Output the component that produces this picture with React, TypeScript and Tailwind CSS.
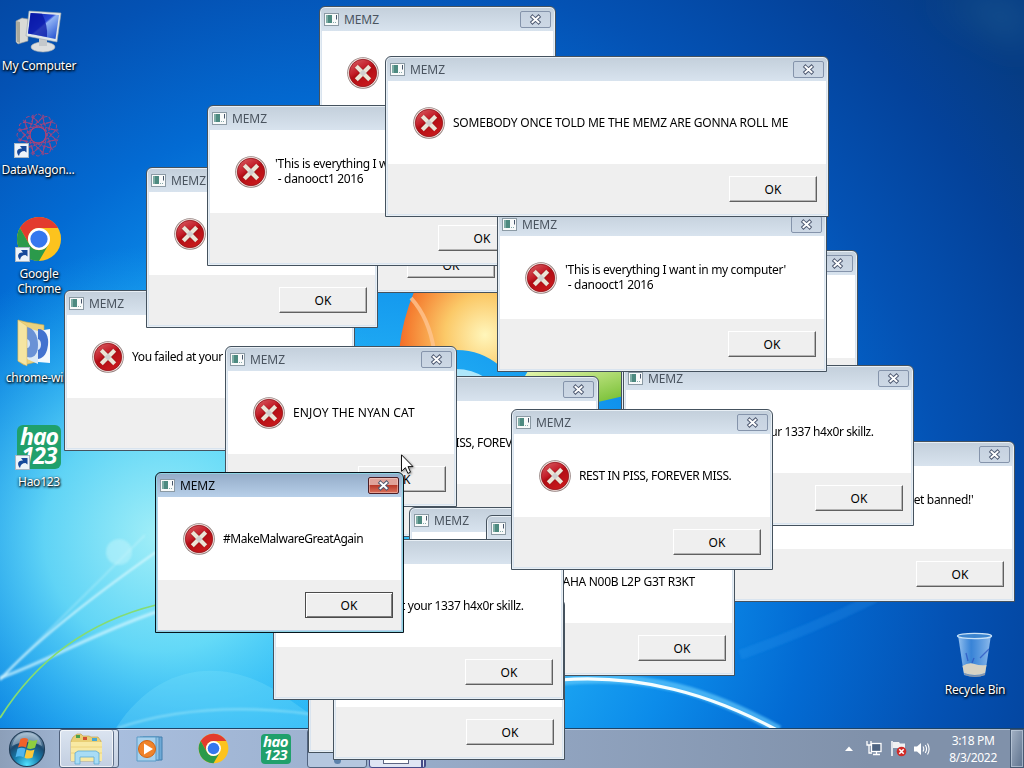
import React from "react";

type Dialog = {
  id: string;
  box: string;
  lines?: string[];
  tracking?: string;
  ok?: string;
  active?: boolean;
};

const SOMEBODY = "SOMEBODY ONCE TOLD ME THE MEMZ ARE GONNA ROLL ME";
const DANOOCT = ["'This is everything I want in my computer'", "\u00a0- danooct1 2016"];
const SKILLZ = ["You failed at your 1337 h4x0r skillz."];
const PISS = ["REST IN PISS, FOREVER MISS."];

// Bottom-most window first.
const dialogs: Dialog[] = [
  { id: "g", box: "left-[270px] top-[132px] w-[236px]", ok: "mr-[8px]" },
  { id: "a", box: "left-[319px] top-[6px] w-[237px]" },
  { id: "i", box: "left-[621px] top-[250px] w-[237px]" },
  { id: "j", box: "left-[695px] top-[441px] w-[320px]", lines: ["'Uh, Club Penguin. Time to get banned!'", "\u00a0"], tracking: "tracking-[-0.33px]", ok: "mr-[8px]" },
  { id: "q", box: "left-[337px] top-[376px] w-[262px]", lines: PISS, tracking: "tracking-[-0.4px]" },
  { id: "f", box: "left-[64px] top-[290px] w-[291px]", lines: SKILLZ, tracking: "tracking-[-0.41px]" },
  { id: "o", box: "left-[308px] top-[592px] w-[240px]" },
  { id: "l", box: "left-[409px] top-[507px] w-[250px]" },
  { id: "k", box: "left-[486px] top-[515px] w-[249px]", lines: ["HAHA N00B L2P G3T R3KT"], tracking: "tracking-[-0.29px]", ok: "mr-[6px]" },
  { id: "n", box: "left-[333px] top-[599px] w-[232px]", ok: "mr-[8px]" },
  { id: "m", box: "left-[273px] top-[539px] w-[291px]", lines: SKILLZ, tracking: "tracking-[-0.41px]", ok: "mr-[8px]" },
  { id: "e", box: "left-[146px] top-[167px] w-[232px]", ok: "mr-[8px]" },
  { id: "c", box: "left-[207px] top-[105px] w-[330px]", lines: DANOOCT, tracking: "tracking-[-0.33px]", ok: "mr-[8px]" },
  { id: "h", box: "left-[623px] top-[365px] w-[291px]", lines: SKILLZ, tracking: "tracking-[-0.41px]", ok: "mr-[8px]" },
  { id: "d", box: "left-[497px] top-[211px] w-[330px]", lines: DANOOCT, tracking: "tracking-[-0.33px]", ok: "mr-[8px]" },
  { id: "b", box: "left-[385px] top-[56px] w-[444px]", lines: [SOMEBODY], tracking: "tracking-[-0.22px]", ok: "mr-[9px]" },
  { id: "p", box: "left-[225px] top-[346px] w-[232px]", lines: ["ENJOY THE NYAN CAT"], tracking: "tracking-[0.11px]", ok: "mr-[8px]" },
  { id: "r", box: "left-[511px] top-[409px] w-[262px]", lines: PISS, tracking: "tracking-[-0.4px]", ok: "mr-[9px]" },
  { id: "s", box: "left-[155px] top-[472px] w-[249px]", lines: ["#MakeMalwareGreatAgain"], tracking: "tracking-[-0.47px]", ok: "mr-[8px]", active: true },
];

function AppGlyph() {
  return (
    <svg width="15" height="13" viewBox="0 0 15 13" className="-mt-px shrink-0">
      <rect x=".5" y=".5" width="14" height="12" fill="#f8fafa" stroke="#8b9aa4" />
      <rect x="2" y="2" width="6" height="8" fill="#4d8a80" />
      <rect x="2" y="2" width="2" height="8" fill="#7fada6" />
      <path d="M9 9.5h1M11 9.5h1" stroke="#8aa" />
      <path d="M12.5 2v4.5" stroke="#47566b" />
    </svg>
  );
}

function ErrorIcon() {
  return (
    <svg width="32" height="32" viewBox="0 0 32 32" className="mt-[33px] shrink-0">
      <defs>
        <linearGradient id="err" x1="0" y1="0" x2="0.6" y2="1">
          <stop offset="0" stopColor="#d9666a" />
          <stop offset=".45" stopColor="#c41f2a" />
          <stop offset=".55" stopColor="#b20d14" />
          <stop offset="1" stopColor="#c8191c" />
        </linearGradient>
      </defs>
      <circle cx="16" cy="16" r="15.8" fill="#93807e" />
      <circle cx="16" cy="16" r="15" fill="#f3e4e1" />
      <circle cx="16" cy="16" r="13.7" fill="url(#err)" stroke="#92141a" strokeWidth=".8" />
      <path d="M9.500 9.500l13 13M22.500 9.500l-13 13" stroke="#8a1014" strokeWidth="5.200" />
      <path d="M9.300 9.300l13.400 13.400M22.700 9.300l-13.400 13.400" stroke="#ece4d6" strokeWidth="4.200" />
      <path d="M16 12.500l3.500 3.500-3.500 3.500-3.500-3.500z" fill="#d0d0d0" />
    </svg>
  );
}

function CloseButton({ active }: { active?: boolean }) {
  return (
    <div
      className={
        active
          ? "flex h-[17px] w-[31px] items-center justify-center rounded-[2px] border border-[#4b1e26] bg-linear-to-b from-[#e0a299] from-45% via-[#b93a2a] via-50% to-[#d9705c] shadow-[inset_0_0_0_1px_rgba(255,220,210,.45)]"
          : "flex h-[17px] w-[31px] items-center justify-center rounded-[2px] border border-[#8594ab] bg-linear-to-b from-[#c6d2e0] to-[#cdd8e5]"
      }
    >
      <svg width="13" height="11" viewBox="0 0 13 11">
        <path d="M3.500 2.800l6 5.400M9.500 2.800L3.500 8.200" stroke="#4d5870" strokeWidth="3.800" strokeLinecap="square" />
        <path d="M3.500 2.800l6 5.400M9.500 2.800L3.500 8.200" stroke="#fff" strokeWidth="2" strokeLinecap="square" />
      </svg>
    </div>
  );
}

function MessageBox({ d }: { d: Dialog }) {
  const frame = d.active
    ? "border-[#07141d] bg-linear-to-b from-[#93abc8] to-[#b9d1ea] to-[25px] shadow-[inset_0_0_0_1px_#8fd3e2]"
    : "border-[#45525e] bg-linear-to-b from-[#c3cfdb] to-[#d9e4ef] to-[25px] shadow-[inset_0_0_0_1px_#e8eff5]";
  return (
    <section className={`absolute flex h-[161px] flex-col rounded-t-[6px] border px-[2px] pb-[2px] ${frame} ${d.box}`}>
      <header className="flex h-[24px] shrink-0 items-start justify-between pl-[2px] pr-[2px] pt-[4px]">
        <div className="flex items-center gap-[5px] pt-[1px]">
          <AppGlyph />
          <span className={`text-[12px] leading-[16px] tracking-[-0.1px] ${d.active ? "text-[#05080c]" : "text-[#4a545f]"}`}>MEMZ</span>
        </div>
        <CloseButton active={d.active} />
      </header>
      <div className="flex h-[83px] shrink-0 overflow-hidden bg-white pl-[25px]">
        <div className="-mt-[7px] flex gap-[8px]">
          {d.lines || d.id === "a" || d.id === "e" ? <ErrorIcon /> : null}
          <div className="flex h-[96px] flex-col justify-center whitespace-nowrap text-[12px] leading-[15px] text-black">
            {(d.lines ?? []).map((t) => (
              <p key={t} className={d.tracking}>{t}</p>
            ))}
          </div>
        </div>
      </div>
      <footer className="flex flex-1 justify-end bg-[#efefef] pt-[12px]">
        {d.ok && (
          <button
            className={`flex h-[26px] w-[88px] items-center justify-center border text-[12px] leading-[15px] text-black ${
              d.active
                ? "border-[#4b4b4b] shadow-[inset_1px_1px_0_#fff,inset_-1px_-1px_0_#7d7d7d]"
                : "border-b-[#606060] border-l-white border-r-[#606060] border-t-white shadow-[inset_-1px_-1px_0_#b4b4b4]"
            } ${d.ok}`}
          >
            OK
          </button>
        )}
      </footer>
    </section>
  );
}

function Wallpaper() {
  return (
    <svg className="absolute inset-0" width="1024" height="768" viewBox="0 0 1024 768">
      <defs>
        <radialGradient id="base" gradientUnits="userSpaceOnUse" cx="360" cy="560" r="820">
          <stop offset="0" stopColor="#35c0fa" />
          <stop offset=".22" stopColor="#22aff5" />
          <stop offset=".4" stopColor="#0c8cea" />
          <stop offset=".55" stopColor="#036bd3" />
          <stop offset=".72" stopColor="#0452b4" />
          <stop offset=".88" stopColor="#04429a" />
          <stop offset="1" stopColor="#063c84" />
        </radialGradient>
        <radialGradient id="glow" gradientUnits="userSpaceOnUse" cx="160" cy="535" r="290">
          <stop offset="0" stopColor="#a9f2f8" stopOpacity=".95" />
          <stop offset=".4" stopColor="#74e4f8" stopOpacity=".8" />
          <stop offset="1" stopColor="#20b8f6" stopOpacity="0" />
        </radialGradient>
        <radialGradient id="orange" gradientUnits="userSpaceOnUse" cx="485" cy="335" r="100">
          <stop offset="0" stopColor="#fff6bb" />
          <stop offset=".4" stopColor="#fbc968" />
          <stop offset=".75" stopColor="#f58334" />
          <stop offset="1" stopColor="#f0501c" />
        </radialGradient>
        <linearGradient id="green" x1="0" y1="0" x2="1" y2="1">
          <stop offset="0" stopColor="#e7f7ae" />
          <stop offset="1" stopColor="#72bd2f" />
        </linearGradient>
        <filter id="soft"><feGaussianBlur stdDeviation="1.2" /></filter>
        <filter id="softer" x="-50%" y="-50%" width="200%" height="200%"><feGaussianBlur stdDeviation="18" /></filter>
      </defs>
      <rect width="1024" height="768" fill="url(#base)" />
      <rect width="500" height="768" fill="url(#glow)" />
      <path d="M930 0h94v50q-40-30-94-50z" fill="#3c83a5" opacity=".3" filter="url(#softer)" />
      <path d="M116 728C160 660 230 655 290 700L330 728z" fill="#7ce4fa" opacity=".28" />
      <g fill="none" filter="url(#soft)">
        <path d="M118 728Q200 700 310 714" stroke="#a5eafa" strokeWidth="2" opacity=".6" />
        <path d="M0 678C50 660 90 635 156 612" stroke="#d3f5ff" strokeWidth="3" opacity=".75" />
        <path d="M0 680Q45 630 156 552" stroke="#dffaff" strokeWidth="2" opacity=".85" />
        <path d="M0 678Q55 625 145 535" stroke="#dffaff" strokeWidth="1.5" opacity=".4" />
        <path d="M740 655Q810 630 875 598" stroke="#35a8f7" strokeWidth="10" opacity=".18" />
        <path d="M560 681C650 672 710 692 779 730" stroke="#5fc6fb" strokeWidth="9" opacity=".7" />
      </g>
      <path d="M560 680C640 674 710 694 777 730" fill="none" stroke="#f4fdff" strokeWidth="3.2" />
      <path d="M0 718Q55 630 156 605" fill="none" stroke="#85dc72" strokeWidth="1.8" />
      <circle cx="119" cy="552" r="13" fill="#c9f7fc" opacity=".45" filter="url(#soft)" />
      <path d="M414 292H500V366Q480 349 454 350L399 350Q403 318 414 292z" fill="url(#orange)" />
      <path d="M411 298Q429 318 434 350" fill="none" stroke="#ffc795" strokeWidth="4" opacity=".75" />
      <path d="M456 369Q472 369 486 378H456z" fill="#aee6fa" />
      <path d="M528 371H624V396L598 402 560 380 525 376z" fill="url(#green)" />
    </svg>
  );
}

function ComputerIcon() {
  return (
    <svg width="48" height="44" viewBox="0 0 48 44">
      <defs>
        <linearGradient id="scr" x1="0" y1="0" x2="1" y2="1">
          <stop offset="0" stopColor="#0a1aa8" />
          <stop offset=".45" stopColor="#2a49d8" />
          <stop offset=".5" stopColor="#8fb2f4" />
          <stop offset="1" stopColor="#1846cc" />
        </linearGradient>
      </defs>
      <path d="M1 12l6-3 6 1v22l-10 3-2-2z" fill="#d9dad6" stroke="#8d9296" strokeWidth=".6" />
      <path d="M1 12l4 1v21l-3-1z" fill="#aaa99c" />
      <ellipse cx="28" cy="38" rx="12" ry="5" fill="#dcdedf" stroke="#a5abb0" strokeWidth=".6" />
      <path d="M24 29h8v8h-8z" fill="#c4c8cb" />
      <path d="M14 2l32 2-4 29-31-6z" fill="#dfe6ea" stroke="#9aa6ad" strokeWidth=".6" />
      <path d="M15.500 4l28.500 2-3.500 24L13 24.500z" fill="url(#scr)" />
      <path d="M16 4l11 .8Q33 16 32 28L13 24.500z" fill="#0716a6" opacity=".75" />
    </svg>
  );
}

function DataWagonIcon() {
  const petals = [0, 30, 60, 90, 120, 150];
  return (
    <svg width="48" height="44" viewBox="0 0 48 44">
      <g fill="none" stroke="#a0457f" strokeWidth="1">
        {petals.map((a) => (
          <g key={a} transform={`rotate(${a} 24 22)`}>
            <ellipse cx="24" cy="22" rx="8" ry="21" strokeDasharray="4 1.5" />
            <path d="M18 2l6 8 6-8M18 42l6-8 6 8" strokeWidth=".8" />
          </g>
        ))}
        <circle cx="24" cy="22" r="8" stroke="#b8406e" />
      </g>
    </svg>
  );
}

function ChromeIcon({ size }: { size: string }) {
  return (
    <svg viewBox="0 0 48 48" className={size}>
      <circle cx="24" cy="24" r="23" fill="#fcc31e" />
      <path d="M4.100 12.500A23 23 0 0 1 43.900 12.500H24A11.500 11.500 0 0 0 14 29.800z" fill="#e33b2e" />
      <path d="M4.100 12.500A23 23 0 0 0 24 47L34 29.800A11.500 11.500 0 0 1 14 29.800z" fill="#2b9a4b" />
      <circle cx="24" cy="24" r="11.500" fill="#fff" />
      <circle cx="24" cy="24" r="9" fill="#3577ee" />
    </svg>
  );
}

function FolderDiscs() {
  return (
    <svg width="48" height="48" viewBox="0 0 48 48">
      <path d="M4 1l8 2 18 3v35l-20 5-6-4z" fill="#ecd27d" stroke="#c9a94f" strokeWidth=".6" />
      <path d="M13 9l11 3v33l-11-5z" fill="#dceaf6" />
      <path d="M13 8c7 1 11 9 11 18s-4 14-11 12z" fill="#6a92d6" />
      <path d="M13 20c4 1 4 9 0 9z" fill="#d5e4f7" />
      <path d="M4 1l9 6v40l-9-5z" fill="#f5e5a2" stroke="#d5b75e" strokeWidth=".5" />
      <path d="M24 12l12-2v34l-12-1z" fill="#f4f9fd" />
      <path d="M24 10c8 0 11 8 10 16s-4 13-10 14z" fill="#4272cf" />
      <path d="M24 20c4 1 4 10 0 11z" fill="#dce9f8" />
    </svg>
  );
}

function HaoLogo({ size }: { size: "lg" | "sm" }) {
  const lg = size === "lg";
  return (
    <div
      className={`flex flex-col items-center justify-center bg-[#20a06c] font-['Open_Sans',sans-serif] font-bold italic text-white ${
        lg ? "h-[44px] w-[44px] rounded-[6px] pb-[2px] text-[23px] leading-[19px] tracking-[-1px]" : "h-[30px] w-[30px] rounded-[4px] pb-[1px] text-[15px] leading-[13px] tracking-[-0.6px]"
      }`}
    >
      <span>hao</span>
      <span>123</span>
    </div>
  );
}

function Shortcut() {
  return (
    <svg width="15" height="15" viewBox="0 0 15 15" className="absolute bottom-px left-0">
      <rect x=".5" y=".5" width="14" height="14" fill="#eef4fa" stroke="#a9b7c4" />
      <path d="M5 13C1 8 4 5 8 5.500L6 3h6.500v6.500L10.500 8C7.500 8 5.500 9.500 5 13z" fill="#17499a" />
    </svg>
  );
}

function BinIcon() {
  return (
    <svg width="38" height="46" viewBox="0 0 38 46">
      <defs>
        <linearGradient id="bin">
          <stop offset="0" stopColor="#a5cdf5" stopOpacity=".9" />
          <stop offset=".4" stopColor="#4f9ae8" stopOpacity=".7" />
          <stop offset="1" stopColor="#9cc6f3" stopOpacity=".9" />
        </linearGradient>
      </defs>
      <path d="M2 3l6 40q11 4 21 0l6-40z" fill="url(#bin)" />
      <path d="M6.500 34q6-4 12-2t12 1l-1.500 8q-10 4-21 0z" fill="#d8d3c4" />
      <path d="M8 41q11 5 21 0v2q-10 4-20 0z" fill="#8d96a5" />
      <path d="M10 21l2 8M18 26l-2 5M33 17L24 26" stroke="#2a50c0" strokeWidth="1.300" opacity=".7" />
      <ellipse cx="18.500" cy="4" rx="17" ry="2.600" fill="#3b84cf" stroke="#c9e2f7" strokeWidth="1.400" />
    </svg>
  );
}

function DesktopIcon({ label, shortcut, children, place }: { label: string; shortcut?: boolean; children: React.ReactNode; place: string }) {
  return (
    <div className={`absolute flex w-[80px] flex-col items-center ${place}`}>
      <div className="relative flex h-[48px] w-[48px] items-center justify-center">
        {children}
        {shortcut && <Shortcut />}
      </div>
      <span className="mt-[3px] whitespace-pre text-center text-[12px] leading-[15px] tracking-[-0.25px] text-white [text-shadow:1px_1px_2px_#000,0_1px_3px_#000]">{label}</span>
    </div>
  );
}

function StartOrb() {
  return (
    <svg width="38" height="38" viewBox="0 0 38 38">
      <defs>
        <radialGradient id="orb" cx=".5" cy=".95" r=".9">
          <stop offset="0" stopColor="#52e2ff" />
          <stop offset=".4" stopColor="#177fae" />
          <stop offset=".7" stopColor="#1b4a70" />
          <stop offset="1" stopColor="#8aa5bd" />
        </radialGradient>
      </defs>
      <circle cx="19" cy="19" r="17.500" fill="url(#orb)" stroke="#223e58" strokeWidth="1.200" />
      <path d="M4 16Q19 8 34 16Q31 3 19 3T4 16z" fill="#dceaf4" opacity=".4" />
      <path d="M12.500 9q4-2 7.500 0l-2 8.500q-4-2-8 0z" fill="#f0622a" />
      <path d="M21 9.800q4 2 8.500 0l-2.500 8q-4 2-8 .5z" fill="#8fce3f" />
      <path d="M9.500 18.800q4-2 8 0l-2 8.500q-4-2-8 0z" fill="#4fb5ee" />
      <path d="M18.500 19.500q4 2 8 0l-2 8q-4 2-8 .2z" fill="#fbc83a" />
    </svg>
  );
}

function ExplorerIcon() {
  return (
    <svg width="34" height="32" viewBox="0 0 34 32">
      <path d="M3 4l4-3h4l2 2h6l2 1h7l3 4v20H1V8z" fill="#e9cf75" stroke="#b99c45" strokeWidth=".6" />
      <path d="M1 9h31v19H1z" fill="#f8e9a3" />
      <path d="M1 14h31M1 20h31" stroke="#ecd27d" />
      <path d="M6 2h4v3H6z" fill="#4aa04c" />
      <path d="M13 4h4v3h-4z" fill="#d25232" />
      <path d="M22 5h5v3h-5z" fill="#4aa8d2" />
      <path d="M5 31V20l3-2h18l3 2v11h-5v-7H10v7z" fill="#a8dcf5" stroke="#5eaad3" strokeWidth=".8" />
    </svg>
  );
}

function PlayerIcon() {
  return (
    <svg width="28" height="26" viewBox="0 0 28 26">
      <path d="M7 1h19v23H7z" fill="#6ea9d6" stroke="#437fae" />
      <path d="M4 1h19v23H4z" fill="#91c2e4" stroke="#4f8dbb" />
      <path d="M1 1h19v24H1z" fill="#a7d1ed" stroke="#5b9bc7" />
      <circle cx="11" cy="13" r="8.500" fill="#f0832a" stroke="#cf6413" />
      <path d="M8 7.500v11l9-5.500z" fill="#fff" />
    </svg>
  );
}

function Tray() {
  return (
    <div className="flex h-full items-center">
      <svg width="8" height="5" viewBox="0 0 8 5"><path d="M0 5l4-4.500L8 5z" fill="#fff" /></svg>
      <svg width="16" height="15" viewBox="0 0 16 15" className="ml-[13px]">
        <rect x="5.500" y="2.500" width="9.500" height="8" fill="#4e6482" stroke="#fff" strokeWidth="1.300" />
        <path d="M7 13.500h7M10.500 11v2M1 0v4h4V0M3 4v8h3" fill="none" stroke="#fff" strokeWidth="1.300" />
      </svg>
      <svg width="17" height="17" viewBox="0 0 17 17" className="ml-[8px]">
        <path d="M2 1v15" stroke="#fff" strokeWidth="1.500" />
        <path d="M3 2h6l1 1.500h5v6H9L8 8H3z" fill="#f0f1f2" />
        <circle cx="11.500" cy="11.500" r="4.800" fill="#d12a26" />
        <path d="M9.300 9.300l4.400 4.400M13.700 9.300l-4.400 4.400" stroke="#fff" strokeWidth="1.600" />
      </svg>
      <svg width="16" height="14" viewBox="0 0 16 14" className="ml-[7px]">
        <path d="M0 4.500h3L7 1v12L3 9.500H0z" fill="#fff" />
        <path d="M9 4.500q1.600 2.500 0 5M11.300 3q2.500 4 0 8M13.500 1.500q3.200 5.500 0 11" fill="none" stroke="#fff" strokeWidth="1.100" />
      </svg>
    </div>
  );
}

function Taskbar() {
  return (
    <footer className="absolute bottom-0 left-0 flex h-[40px] w-[1024px] items-center border-t border-[#1d4468] bg-linear-to-r from-[#8c9fb9] from-0% via-[#a9bfdf] via-10% to-[#8091aa] to-85% shadow-[inset_0_1px_0_rgba(225,238,250,.5)]">
      <div className="flex h-full w-[59px] items-center pl-[8px]"><StartOrb /></div>
      <div className="flex h-[39px] w-[60px] rounded-[3px] border border-[#50617b] bg-linear-to-b from-[#dbe4f0] to-[#c3cfe1]">
        <div className="flex w-[54px] items-center justify-center rounded-[3px] border-r border-[#61728b] shadow-[inset_0_0_0_1px_rgba(255,255,255,.7)]"><ExplorerIcon /></div>
      </div>
      <div className="flex w-[62px] justify-center"><PlayerIcon /></div>
      <div className="flex w-[64px] justify-center"><ChromeIcon size="h-[31px] w-[31px]" /></div>
      <div className="flex w-[61px] justify-center"><HaoLogo size="sm" /></div>
      <div className="ml-[1px] flex h-[39px] w-[60px] items-end justify-center rounded-[3px] border border-[#51637f] bg-[#b5c7df] pb-[3px]">
        <div className="h-[5px] w-[7px] rounded-b-full bg-[#5d82ab]" />
      </div>
      <div className="ml-[2px] flex h-[39px] w-[57px] items-end justify-center gap-[3px] rounded-[3px] border border-[#464c88] border-r-[5px] border-double bg-[#dfe5f3] pb-[3px]">
        <div className="h-[7px] w-[26px] border border-[#5d6683] bg-white" />
      </div>
      <div className="ml-auto mr-[19px]"><Tray /></div>
      <div className="mr-[13px] flex flex-col items-center text-[12px] leading-[17px] tracking-[-0.3px] text-white">
        <span>3:18 PM</span>
        <span>8/3/2022</span>
      </div>
      <div className="h-full w-[14px] border border-[#475a73] bg-linear-to-br from-[#a4b2c5] to-[#5e728d] shadow-[inset_0_0_0_1px_rgba(200,213,228,.6)]" />
    </footer>
  );
}

export default function App() {
  return (
    <main className="relative h-[768px] w-[1024px] overflow-hidden bg-[#0c90ee] font-['Noto_Sans','Open_Sans',sans-serif]">
      <Wallpaper />
      <DesktopIcon label="My Computer" place="left-[-1px] top-[7px]"><ComputerIcon /></DesktopIcon>
      <DesktopIcon label="DataWagon..." place="left-[-2px] top-[111px]" shortcut><DataWagonIcon /></DesktopIcon>
      <DesktopIcon label={"Google\nChrome"} place="left-[-1px] top-[215px]" shortcut><ChromeIcon size="h-[46px] w-[46px]" /></DesktopIcon>
      <DesktopIcon label="chrome-win" place="left-[-2px] top-[319px]"><FolderDiscs /></DesktopIcon>
      <DesktopIcon label="Hao123" place="left-[-1px] top-[423px]" shortcut><HaoLogo size="lg" /></DesktopIcon>
      <DesktopIcon label="Recycle Bin" place="left-[935px] top-[631px]"><BinIcon /></DesktopIcon>
      <Taskbar />
      {dialogs.map((d) => (
        <MessageBox key={d.id} d={d} />
      ))}
      <svg width="14" height="21" viewBox="0 0 14 21" className="absolute left-[401px] top-[454px] drop-shadow-[1px_1px_1px_rgba(0,0,0,.4)]">
        <path d="M.5.8v16.500l3.900-3.600 2.500 5.700 2.600-1.200L7 12.600h5z" fill="#fff" stroke="#111" />
      </svg>
    </main>
  );
}
